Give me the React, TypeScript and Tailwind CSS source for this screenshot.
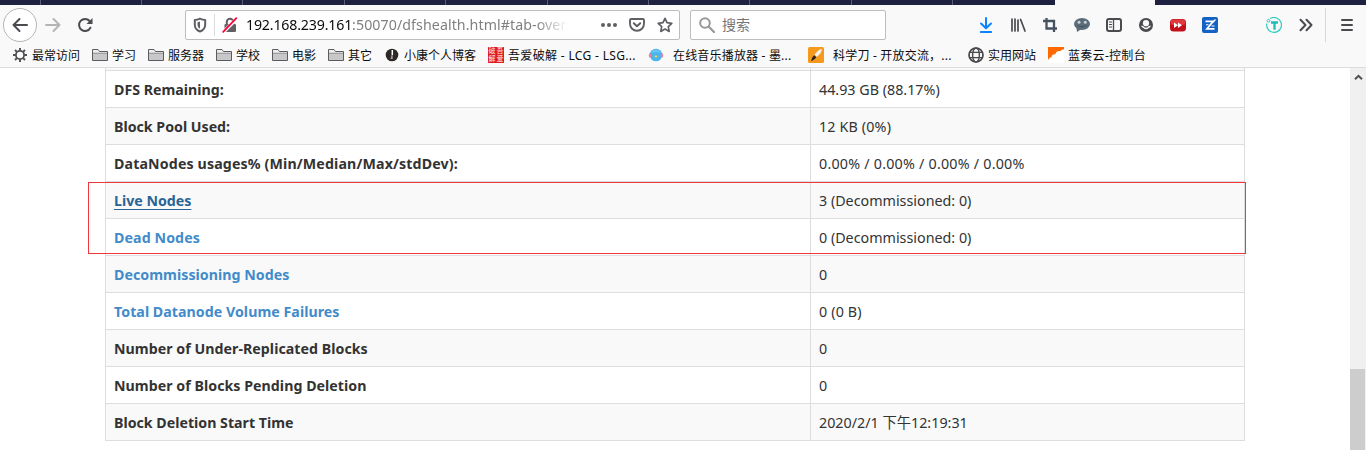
import type { ReactNode } from "react";

const FONT = "font-['Noto_Sans','Noto_Sans_CJK_SC',sans-serif]";

function Svg({ className = "", box = "0 0 16 16", children }: { className?: string; box?: string; children: ReactNode }) {
  return (
    <svg viewBox={box} className={`shrink-0 ${className || "size-4"}`} fill="none">
      {children}
    </svg>
  );
}

const tabWidths = ["w-[41px]", "w-[101px]", "w-[101px]", "w-[102px]", "w-[101px]", "w-[102px]", "w-[101px]", "w-[101px]", "w-[102px]", "w-[101px]"];

function TabStrip() {
  return (
    <div className="flex h-[5px] bg-[#1f2140]">
      {tabWidths.map((w, i) => (
        <div key={i} className={`${w} shrink-0 border-r border-[#5d5e75]`} />
      ))}
      <div className="w-[102px] shrink-0" />
      <div className="w-[100px] shrink-0 bg-[#f9f9fa]" />
    </div>
  );
}

function NavBar() {
  return (
    <div className="flex h-10 items-center">
      <div className="ml-[3px] flex size-[34px] shrink-0 items-center justify-center rounded-full border border-[#b5b5b6] bg-white">
        <Svg>
          <path d="M15 8H1.5M7.5 2L1.5 8l6 6" stroke="#4a4a4f" strokeWidth="2" strokeLinecap="round" strokeLinejoin="round" />
        </Svg>
      </div>
      <Svg className="ml-2 size-4">
        <path d="M1 8h13.5M8.5 2l6 6-6 6" stroke="#b5b5b6" strokeWidth="2" strokeLinecap="round" strokeLinejoin="round" />
      </Svg>
      <Svg className="ml-4 size-4">
        <path d="M13.4 10.7A6 6 0 1 1 12.6 4" stroke="#4a4a4f" strokeWidth="2" strokeLinecap="round" />
        <path d="M15.5 1v6H9.5z" fill="#4a4a4f" />
      </Svg>

      <div className="ml-[92px] flex h-[30px] w-[495px] shrink-0 items-center rounded-[2px] border border-[#bdbdbe] bg-white">
        <Svg className="ml-[6px] size-4">
          <path d="M8 1.7c-1.8 1-3.6 1.3-5.2 1.3v4.500c0 3.600 2.200 5.900 5.200 7 3-1.100 5.200-3.400 5.200-7V3C11.600 3 9.800 2.700 8 1.700z" stroke="#606064" strokeWidth="2" strokeLinejoin="round" />
          <path d="M8 4.500C7.200 5 6.300 5.200 5.500 5.300v2.500c0 1.800 1 3.200 2.500 4z" fill="#606064" />
        </Svg>
        <div className="ml-[6px] h-[22px] w-px bg-[#dcdcdc]" />
        <Svg className="ml-[7px] size-4">
          <path d="M4.800 8V5a3.200 3.200 0 0 1 6.400 0v3" stroke="#606064" strokeWidth="2" />
          <rect x="2.500" y="7" width="11.500" height="8" rx="1.300" fill="#606064" />
          <path d="M1 15.500L14.500 2" stroke="#fff" strokeWidth="3.400" />
          <path d="M1.200 14.800L14.300 1.200" stroke="#ff0039" strokeWidth="1.800" strokeLinecap="round" />
        </Svg>
        <div className="ml-[8px] w-[322px] overflow-hidden text-[14.2px] leading-5 tracking-[-0.18px] whitespace-nowrap text-[#808080] [mask-image:linear-gradient(to_right,black_290px,transparent_322px)]">
          <span className="text-[#0c0c0d]">192.168.239.161</span>
          <span className="tracking-[0.08px]">:50070/dfshealth.html#tab-overview</span>
        </div>
        <Svg className="ml-[33px] size-4">
          <circle cx="2" cy="8" r="2" fill="#606064" />
          <circle cx="8" cy="8" r="2" fill="#606064" />
          <circle cx="14" cy="8" r="2" fill="#606064" />
        </Svg>
        <Svg className="ml-[12px] size-4">
          <path d="M2.200 2h11.600c.7 0 1.200.5 1.200 1.200v3.600a7 7 0 0 1-14 0V3.200C1 2.500 1.500 2 2.200 2z" stroke="#606064" strokeWidth="1.900" />
          <path d="M4.800 6.200L8 9.300l3.200-3.100" stroke="#606064" strokeWidth="2" strokeLinecap="round" strokeLinejoin="round" />
        </Svg>
        <Svg className="ml-[12px] size-4">
          <path d="M8 1.300l2 4.400 4.800.6-3.500 3.300.9 4.800L8 12.100l-4.200 2.300.9-4.800L1.200 6.300 6 5.700z" stroke="#606064" strokeWidth="1.700" strokeLinejoin="round" />
        </Svg>
      </div>

      <div className="ml-[10px] flex h-[30px] w-[196px] shrink-0 items-center rounded-[2px] border border-[#bdbdbe] bg-white">
        <Svg className="ml-2 size-4">
          <circle cx="6" cy="6" r="4.800" stroke="#98989a" strokeWidth="2" />
          <path d="M9.800 9.800L15 15" stroke="#98989a" strokeWidth="2.200" strokeLinecap="round" />
        </Svg>
        <span className="ml-[7px] text-[14px] leading-5 text-[#75757a]">搜索</span>
      </div>

      <Svg className="ml-[92px] size-4">
        <path d="M8 1v10M3 6.500L8 11.300l5-4.800" stroke="#0a84ff" strokeWidth="2" strokeLinecap="round" strokeLinejoin="round" />
        <path d="M2.800 15h10.400" stroke="#0a84ff" strokeWidth="2" strokeLinecap="round" />
      </Svg>
      <Svg className="ml-4 size-4">
        <path d="M2 2v12M5 2v12M8 3v11M10.600 2.500L15 14" stroke="#4a4a4f" strokeWidth="1.700" strokeLinecap="round" />
      </Svg>
      <Svg className="ml-4 size-4">
        <path d="M4.500 1v10.500H15M1 4h11v11" stroke="#45525f" strokeWidth="2.300" />
      </Svg>
      <Svg className="ml-4 size-4">
        <ellipse cx="8" cy="7" rx="8" ry="6" fill="#5c6b78" />
        <path d="M2.500 10.500L3 15l4.500-3z" fill="#5c6b78" />
        <circle cx="5" cy="5.300" r="1.500" fill="#c9d0d6" />
        <circle cx="11.300" cy="5.300" r="1.500" fill="#c9d0d6" />
        <path d="M3.500 8.500c2.600 1.600 6.400 1.600 9 0" stroke="#3f4c58" strokeWidth=".8" />
      </Svg>
      <Svg className="ml-4 size-4">
        <rect x="1" y="2" width="14" height="12" rx="2" stroke="#4a4a4f" strokeWidth="2" />
        <path d="M7.500 2v12" stroke="#4a4a4f" strokeWidth="1.300" />
        <path d="M3 5h3M3 7.500h3M3 10h3" stroke="#4a4a4f" strokeWidth="1" />
      </Svg>
      <Svg className="ml-4 size-4">
        <circle cx="8" cy="8" r="7" fill="#4a4a4f" />
        <circle cx="8" cy="6.200" r="3.100" fill="#f9f9fa" />
        <path d="M3.500 9.300c1.200.1 1.600.6 2.200 1.200 1.300 1.100 3.300 1.100 4.600 0 .6-.6 1-1.100 2.200-1.200" stroke="#f9f9fa" strokeWidth="1.500" />
      </Svg>
      <Svg className="ml-4 size-4">
        <rect y="2" width="16" height="12.500" rx="3.500" fill="#c4101a" />
        <rect x=".7" y="2.500" width="14.600" height="5.500" rx="2.500" fill="#e03a3f" />
        <path d="M4 5.500L8 8.200 4 11zM8 5.500l4 2.700L8 11z" fill="#fff" />
      </Svg>
      <Svg className="ml-4 size-4">
        <rect width="16" height="16" rx="2" fill="#1463c4" />
        <path d="M3.500 4.300h7.700L5 11.800h7.500" stroke="#fff" strokeWidth="1.800" />
        <path d="M4 7.800h2.500M9.500 9h3" stroke="#fff" strokeWidth="1.100" />
        <path d="M10.500 5.500l3-3" stroke="#fff" strokeWidth="1.300" />
      </Svg>
      <Svg className="ml-12 size-4">
        <path d="M4.200 1.600A7.400 7.400 0 1 1 .8 6.500" stroke="#2ccac1" strokeWidth="1.200" />
        <circle cx="2.500" cy="3.800" r="1.400" stroke="#2ccac1" strokeWidth="1" />
        <path d="M5 5.500h7M8.500 5.500v7.300" stroke="#20bdb5" strokeWidth="2.300" />
      </Svg>
      <Svg className="ml-4 size-4">
        <path d="M2.500 2.800L7.500 8l-5 5.200M8.500 2.800l5 5.200-5 5.200" stroke="#4a4a4f" strokeWidth="2" strokeLinecap="round" strokeLinejoin="round" />
      </Svg>
      <div className="ml-[11px] h-[34px] w-px shrink-0 bg-[#d8d8d9]" />
      <Svg className="ml-[13px] size-4">
        <path d="M3 3h10M3 8h10M3 13h10" stroke="#4a4a4f" strokeWidth="2" strokeLinecap="round" />
      </Svg>
    </div>
  );
}

function Folder() {
  return (
    <Svg>
      <path d="M.5 13.500v-11h5.500l1.500 2h8v9z" fill="#c8c8ca" stroke="#5b5b5e" strokeLinejoin="round" />
      <path d="M1 3h4.800l1.400 2H15v1H1z" fill="#eeeeef" />
      <path d="M1 6.200h14" stroke="#77777a" strokeWidth=".7" />
    </Svg>
  );
}

const gear = (
  <Svg>
    <circle cx="8" cy="8" r="4.100" stroke="#4f4f52" strokeWidth="1.800" />
    <path d="M8 1v2.500M8 12.500V15M1 8h2.500M12.500 8H15M3 3l1.900 1.900M11.100 11.100L13 13M13 3l-1.900 1.900M4.900 11.100L3 13" stroke="#4f4f52" strokeWidth="1.900" />
  </Svg>
);
const blogIcon = (
  <Svg>
    <circle cx="8" cy="8" r="6.300" fill="#2b2727" />
    <path d="M8.300 3v5" stroke="#fff" strokeWidth="1.500" />
    <path d="M7.500 8l-1 4h2.300l-.2-4z" fill="#a89a98" />
  </Svg>
);
const sealIcon = (
  <div className="grid size-4 shrink-0 grid-cols-2 bg-[#e0191c] text-center text-[7px] leading-[8px] tracking-normal text-[#ffe9e4]">
    <span>破</span>
    <span>吾</span>
    <span>解</span>
    <span>爱</span>
  </div>
);
const musicIcon = (
  <Svg>
    <circle cx="8" cy="8" r="6.300" fill="#4bb4ee" />
    <path d="M3 6a5.500 5.500 0 0 1 10 0c-3-1-7-1-10 0z" fill="#6cc4f3" />
    <ellipse cx="2" cy="8.500" rx="1.200" ry="2.200" fill="#e8849b" />
    <ellipse cx="14" cy="8.500" rx="1.200" ry="2.200" fill="#e8849b" />
    <ellipse cx="8" cy="9.500" rx="1.500" ry="1" fill="#f5d04e" />
  </Svg>
);
const knifeIcon = (
  <Svg>
    <rect width="16" height="16" rx="1.500" fill="#f59a1d" />
    <path d="M13.700 1.800c.3 3-2 6-5 8L6.500 7.700C8.500 5 11 2.500 13.700 1.800z" fill="#f4f1ec" />
    <path d="M6.300 8.200l2 2c-1 1.500-3 3.500-5.300 3.800.9-1.800 1-4.200 3.300-5.800z" fill="#2d2620" />
  </Svg>
);
const globeIcon = (
  <Svg>
    <circle cx="8" cy="8" r="7" stroke="#4a4a4d" strokeWidth="1.700" />
    <ellipse cx="8" cy="8" rx="3.400" ry="7" stroke="#4a4a4d" strokeWidth="1.400" />
    <path d="M1.800 5.300h12.400M1.800 10.700h12.400" stroke="#4a4a4d" strokeWidth="1.300" />
  </Svg>
);
const lanzouIcon = (
  <Svg>
    <path d="M0 0h16v16H0z" fill="#fff" />
    <path d="M0 0h16v2.500c-1.700-.2-2.800.4-3.500 1.500C9.500 3.700 7.800 5 7.300 7.200 5 7 3.700 8.300 3.500 10.300 1.800 10.500.5 11.700 0 13.500z" fill="#ff6a00" />
  </Svg>
);

type Bookmark = { icon: ReactNode; text: string; cls: string };
const bookmarks: Bookmark[] = [
  { icon: gear, text: "最常访问", cls: "w-[80px] gap-1" },
  { icon: <Folder />, text: "学习", cls: "w-[56px] gap-1" },
  { icon: <Folder />, text: "服务器", cls: "w-[68px] gap-1" },
  { icon: <Folder />, text: "学校", cls: "w-[56px] gap-1" },
  { icon: <Folder />, text: "电影", cls: "w-[56px] gap-1" },
  { icon: <Folder />, text: "其它", cls: "w-[56px] gap-1" },
  { icon: blogIcon, text: "小康个人博客", cls: "w-[104px] gap-1" },
  { icon: sealIcon, text: "吾爱破解 - LCG - LSG...", cls: "w-[160px] gap-1 tracking-[0.33px]" },
  { icon: musicIcon, text: "在线音乐播放器 - 墨...", cls: "w-[160px] gap-[9px] tracking-[0.18px]" },
  { icon: knifeIcon, text: "科学刀 - 开放交流，...", cls: "w-[160px] gap-[9px] tracking-[0.2px]" },
  { icon: globeIcon, text: "实用网站", cls: "w-[80px] gap-1" },
  { icon: lanzouIcon, text: "蓝奏云-控制台", cls: "w-[110px] gap-1 tracking-[0.3px]" },
];

function BookmarkBar() {
  return (
    <div className="flex h-[23px] items-center border-b border-[#dcdcdd] pb-[2px] pl-3 text-[12px] leading-4 text-[#0c0c0d]">
      {bookmarks.map((b) => (
        <div key={b.text} className={`flex h-4 shrink-0 items-center whitespace-nowrap ${b.cls}`}>
          {b.icon}
          <span className="pt-[2px]">{b.text}</span>
        </div>
      ))}
    </div>
  );
}

type Row = { label: string; value: string; tone?: string; track?: string };
const rows: Row[] = [
  { label: "DFS Remaining:", value: "44.93 GB (88.17%)" },
  { label: "Block Pool Used:", value: "12 KB (0%)", track: "tracking-[0.15px]" },
  { label: "DataNodes usages% (Min/Median/Max/stdDev):", value: "0.00% / 0.00% / 0.00% / 0.00%", tone: "tracking-[0.14px]", track: "tracking-[0.22px]" },
  { label: "Live Nodes", value: "3 (Decommissioned: 0)", tone: "text-[#2a6496] underline underline-offset-[3px] decoration-1" },
  { label: "Dead Nodes", value: "0 (Decommissioned: 0)", tone: "text-[#428bca] tracking-[0.1px]" },
  { label: "Decommissioning Nodes", value: "0", tone: "text-[#428bca] tracking-[0.04px]" },
  { label: "Total Datanode Volume Failures", value: "0 (0 B)", tone: "text-[#428bca] tracking-[0.04px]", track: "tracking-[0.15px]" },
  { label: "Number of Under-Replicated Blocks", value: "0", tone: "tracking-[0.04px]" },
  { label: "Number of Blocks Pending Deletion", value: "0", tone: "tracking-[0.04px]" },
  { label: "Block Deletion Start Time", value: "2020/2/1 下午12:19:31" },
];

export default function App() {
  return (
    <div className={`flex h-[450px] w-[1366px] flex-col overflow-hidden bg-white ${FONT}`}>
      <div className="shrink-0 bg-[#f9f9fa]">
        <TabStrip />
        <NavBar />
        <BookmarkBar />
      </div>
      <div className="flex min-h-0 flex-1">
        <div className="relative w-[1350px] pl-[105px]">
          <div className="w-[1140px] border-x border-[#dddddd] text-[14.3px] leading-5 text-[#333333]">
            <div className="flex h-[3px] border-b border-[#dddddd] bg-[#f9f9f9]">
              <div className="w-[705px] border-r border-[#dddddd]" />
            </div>
            {rows.map((r, i) => (
              <div key={r.label} className={`flex h-[37px] border-b border-[#dddddd] ${i % 2 ? "bg-[#f9f9f9]" : "bg-white"}`}>
                <div className="flex w-[705px] items-center border-r border-[#dddddd] pt-[2px] pl-2 text-[14.2px] font-bold">
                  <span className={r.tone}>{r.label}</span>
                </div>
                <div className={`flex items-center pt-[2px] pl-2 ${r.track ?? ""}`}>{r.value}</div>
              </div>
            ))}
          </div>
          <div className="absolute top-[114px] left-[88px] h-[72px] w-[1158px] border border-[#f0383a]" />
        </div>
        <div className="flex w-4 flex-col bg-[#f0f0f0]">
          <div className="flex h-[18px] items-center justify-center">
            <Svg className="size-[9px]" box="0 0 9 9">
              <path d="M1 6.300L4.500 2.800 8 6.300" stroke="#505050" strokeWidth="2" />
            </Svg>
          </div>
          <div className="mt-[283px] w-[15px] flex-1 bg-[#cdcdcd]" />
        </div>
      </div>
    </div>
  );
}
